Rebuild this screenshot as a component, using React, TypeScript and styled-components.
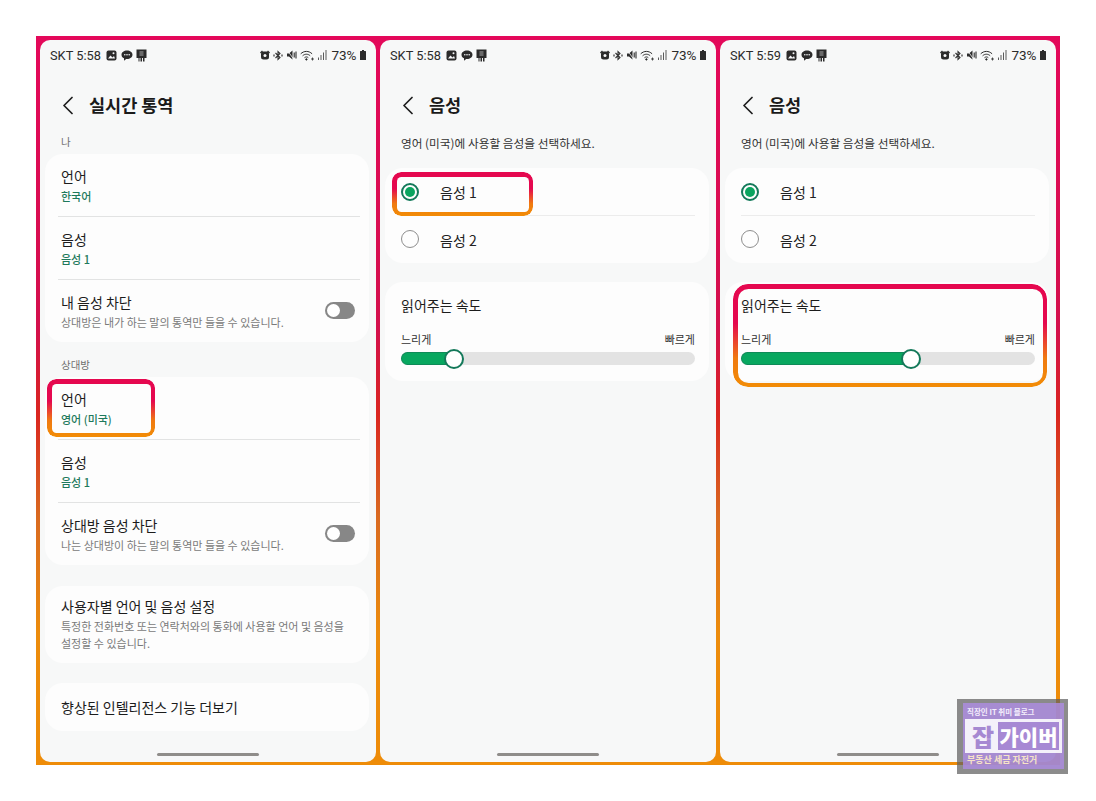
import React from "react";
import styled, { createGlobalStyle } from "styled-components";

const Global = createGlobalStyle`
  html, body { margin: 0; padding: 0; background: #fff; }
  body { font-family: "Noto Sans CJK KR", "Noto Sans", sans-serif; color: #1c1c1c; }
  * { box-sizing: border-box; }
`;

const Page = styled.div`
  width: 1096px;
  height: 801px;
  padding: 36px;
  position: relative;
  overflow: hidden;
`;
const Frame = styled.div`
  width: 1024px;
  height: 729px;
  padding: 4px 4px 3px;
  display: flex;
  gap: 4px;
  background: linear-gradient(180deg, #e4085a 0%, #d30f4c 40%, #da261f 52%, #d96a20 66%, #ec8c0c 82%, #ee8c08 100%);
`;
const Screen = styled.section`
  position: relative;
  width: 336px;
  display: flex;
  flex-direction: column;
  background: #f7f8f8;
  border-radius: 10px;
  overflow: hidden;
`;
const StatusBar = styled.div`
  height: 30px;
  padding: 0 10px;
  display: flex;
  align-items: center;
  justify-content: space-between;
  font-family: Roboto, sans-serif;
  font-size: 12.8px;
  color: #2b2b2b;
`;
const StatusGroup = styled.div`
  display: flex;
  align-items: center;
  gap: 3.5px;
`;
const Clock = styled.span`
  margin-right: 2px;
`;
const Percent = styled.span`
  font-size: 13.5px;
  margin-left: 1px;
`;
const Header = styled.header`
  height: 60px;
  padding: 11px 0 1px 22px;
  display: flex;
  align-items: center;
  gap: 16px;
`;
const Title = styled.h1`
  margin: 0;
  font-size: 17.5px;
  line-height: 24px;
  font-weight: 700;
  color: #1a1a1a;
`;
const SectionLabel = styled.div<{ $top?: number }>`
  height: ${(p) => (p.$top ? 25 + p.$top : 24)}px;
  padding: ${(p) => p.$top ?? 0}px 0 1px 21px;
  display: flex;
  align-items: center;
  font-size: 10.5px;
  color: #6f6f6f;
`;
const Subtitle = styled.div`
  height: 24px;
  padding-left: 21px;
  display: flex;
  align-items: center;
  font-size: 11.7px;
  color: #333;
`;
const Card = styled.div<{ $mt?: number }>`
  margin: ${(p) => p.$mt ?? 0}px 7px 0 5px;
  background: #fdfdfd;
  border-radius: 18px;
`;
const Row = styled.div`
  height: 62px;
  padding: 13px 14px 0 16px;
  display: flex;
  justify-content: space-between;
  align-items: flex-start;
`;
const ToggleRowBox = styled(Row)`
  padding-top: 13px;
`;
const Divider = styled.div`
  height: 1px;
  margin: 0 9px 0 13px;
  background: #e2e3e3;
`;
const RadioDivider = styled(Divider)`
  margin: 0 14px 0 16px;
  background: #ececec;
`;
const RowText = styled.div`
  display: flex;
  flex-direction: column;
`;
const RowTitle = styled.div`
  font-size: 14px;
  line-height: 18px;
  color: #1c1c1c;
`;
const RowValue = styled.div`
  margin-top: 3px;
  font-size: 11px;
  line-height: 16px;
  font-weight: 500;
  color: #1f7a5c;
`;
const RowHint = styled.div`
  margin-top: 3px;
  font-size: 11px;
  line-height: 16px;
  color: #7a7a7a;
`;
const Toggle = styled.div`
  width: 30px;
  height: 17px;
  margin-top: 9px;
  padding: 2px;
  border-radius: 9px;
  background: #878787;
  display: flex;
`;
const ToggleKnob = styled.div`
  width: 13px;
  height: 13px;
  border-radius: 50%;
  background: #fff;
`;
const InfoCard = styled(Card)`
  height: 77px;
  padding: 11px 14px 0 16px;
`;
const InfoText = styled.div`
  margin-top: 3px;
  font-size: 11px;
  line-height: 17px;
  color: #7a7a7a;
`;
const LinkCard = styled(Card)`
  height: 48px;
  padding: 0 0 1px 16px;
  display: flex;
  align-items: center;
`;
const HomeBar = styled.div`
  width: 102px;
  height: 3px;
  margin: auto auto 6px;
  border-radius: 2px;
  background: #8f8d8a;
`;
const RadioRow = styled.div`
  height: 47px;
  padding-left: 16px;
  display: flex;
  align-items: center;
  font-size: 14px;
  color: #222;
`;
const RadioCircle = styled.div<{ $on?: boolean }>`
  width: 18px;
  height: 18px;
  margin: ${(p) => (p.$on ? "0" : "-2px")} 21px 0 0;
  border-radius: 50%;
  border: ${(p) => (p.$on ? "2px solid #14795a" : "1.5px solid #8e8e8e")};
  display: flex;
  align-items: center;
  justify-content: center;
`;
const RadioDot = styled.div`
  width: 10px;
  height: 10px;
  border-radius: 50%;
  background: #0aa45f;
`;
const SpeedCard = styled(Card)`
  height: 99px;
  padding: 14px 14px 0 16px;
`;
const SpeedLabels = styled.div`
  margin-top: 17px;
  display: flex;
  justify-content: space-between;
  font-size: 11px;
  line-height: 16px;
  color: #333;
`;
const Track = styled.div`
  position: relative;
  margin-top: 5px;
  height: 13px;
  border-radius: 7px;
  background: #e3e3e3;
`;
const Fill = styled.div<{ $value: number }>`
  width: ${(p) => p.$value}px;
  height: 13px;
  border-radius: 7px 0 0 7px;
  background: #08a75f;
  border: 1px solid #0f8a58;
  border-right: 0;
`;
const Thumb = styled.div<{ $value: number }>`
  position: absolute;
  left: ${(p) => p.$value - 10}px;
  top: -3.5px;
  width: 20px;
  height: 20px;
  border-radius: 50%;
  background: #fff;
  border: 2px solid #14795a;
`;
const Highlight = styled.div<{ $x: number; $y: number; $w: number; $h: number; $r?: number }>`
  position: absolute;
  left: ${(p) => p.$x}px;
  top: ${(p) => p.$y}px;
  width: ${(p) => p.$w}px;
  height: ${(p) => p.$h}px;
  padding: 4.5px;
  border-radius: ${(p) => p.$r ?? 9}px;
  background: linear-gradient(180deg, #e5084f 0%, #e5084f 38%, #f07a10 72%, #f28c06 100%);
  -webkit-mask: linear-gradient(#000 0 0) content-box, linear-gradient(#000 0 0);
  -webkit-mask-composite: xor;
  mask-composite: exclude;
`;
const Watermark = styled.div`
  position: absolute;
  left: 957px;
  top: 699px;
  width: 111px;
  height: 75px;
  padding: 4px 4px 5px 6px;
  background: rgba(95, 95, 95, 0.72);
`;
const WatermarkInner = styled.div`
  height: 66px;
  padding: 2px;
  background: rgba(172, 140, 222, 0.85);
  display: flex;
  flex-direction: column;
`;
const WatermarkTop = styled.div`
  height: 14px;
  padding-left: 2px;
  font-size: 7.5px;
  line-height: 14px;
  font-weight: 700;
  color: #f4eefc;
`;
const WatermarkLogo = styled.div`
  height: 34px;
  padding: 3px;
  display: flex;
  align-items: center;
  background: rgba(255, 255, 255, 0.88);
`;
const WatermarkChar = styled.div`
  width: 30px;
  text-align: center;
  font-size: 24px;
  line-height: 28px;
  font-weight: 900;
  color: #a688d2;
`;
const WatermarkName = styled.div`
  flex: 1;
  height: 28px;
  text-align: center;
  font-size: 21px;
  line-height: 28px;
  font-weight: 900;
  color: #fff;
  background: rgba(160, 128, 208, 0.92);
`;
const WatermarkBottom = styled.div`
  height: 14px;
  padding-left: 2px;
  font-size: 9px;
  line-height: 14px;
  font-weight: 700;
  color: #f6e3c8;
`;

const Svg = styled.svg`
  display: block;
  flex: none;
`;

const Back = () => (
  <Svg width="11" height="19" viewBox="0 0 11 19" fill="none">
    <path d="M10 1.500 2 9.500l8 8" stroke="#1c1c1c" strokeWidth="1.700" strokeLinecap="round" strokeLinejoin="round" />
  </Svg>
);
const IconImage = () => (
  <Svg width="11" height="11" viewBox="0 0 11 11">
    <rect x="0.500" y="0.500" width="10" height="10" rx="2" fill="#2b2b2b" />
    <path d="M2 8.500 4.500 5.500l2 2L8 6l1 2.500z" fill="#f6f7f8" />
    <circle cx="7.500" cy="3.300" r="1" fill="#f6f7f8" />
  </Svg>
);
const IconChat = () => (
  <Svg width="12" height="11" viewBox="0 0 12 11">
    <path d="M6 .5c3 0 5.500 1.800 5.500 4.200S9 9 6 9l-.8 0L3 10.800V8.300C1.500 7.600.5 6.300.5 4.700.5 2.300 3 .5 6 .5z" fill="#2b2b2b" />
    <circle cx="3.800" cy="4.700" r=".8" fill="#f6f7f8" />
    <circle cx="6" cy="4.700" r=".8" fill="#f6f7f8" />
    <circle cx="8.200" cy="4.700" r=".8" fill="#f6f7f8" />
  </Svg>
);
const IconBoard = () => (
  <Svg width="11" height="13" viewBox="0 0 11 13">
    <path d="M.5 .5h10v8.500H8.500V12.500H7V9H6V12.500H4.500V9H3.500V12.500H2.500V9H.5z" fill="#2b2b2b" />
    <path d="M3.500 2h4v5h-4z" fill="#6a6a6a" />
  </Svg>
);
const IconAlarm = () => (
  <Svg width="10" height="10" viewBox="0 0 10 10">
    <rect x="1" y="1.500" width="8" height="8" rx="2.500" fill="#2b2b2b" />
    <path d="M0 2.500 2 .5l1 1-2 2zM10 2.500 8 .5 7 1.500l2 2z" fill="#2b2b2b" />
    <circle cx="5" cy="5.500" r="1.500" fill="#f6f7f8" />
  </Svg>
);
const IconBluetooth = () => (
  <Svg width="10" height="11" viewBox="0 0 10 11" fill="none" stroke="#333">
    <path d="M2.500 3 7 7.500 5 9.500v-8L7 3.500 2.500 8" strokeWidth="1.100" />
    <path d="M1 4.500v2M9 4.500v2" strokeWidth="1.200" />
  </Svg>
);
const IconMute = () => (
  <Svg width="10" height="10" viewBox="0 0 10 10">
    <path d="M0 3.500h2L5.500.5v9L2 6.500H0z" fill="#2b2b2b" />
    <path d="M7.200 2.500v5M9 1.500v7" stroke="#2b2b2b" strokeWidth="1.100" />
    <path d="M.5.500 6.500 9" stroke="#f6f7f8" strokeWidth=".8" />
  </Svg>
);
const IconWifi = () => (
  <Svg width="14" height="11" viewBox="0 0 14 11" fill="none" stroke="#2b2b2b" strokeWidth="1">
    <path d="M.7 3.800C4 .6 8.800.6 12.100 3.800" />
    <path d="M2.600 5.800c2.300-2.100 5.400-2.100 7.600 0" />
    <path d="M4.500 7.700c1.200-1 2.700-1 3.800 0" />
    <circle cx="6.400" cy="9.400" r=".7" fill="#2b2b2b" />
    <path d="M12.500 7.500v3M11 9h3" strokeWidth=".8" />
  </Svg>
);
const IconSignal = () => (
  <Svg width="9" height="10" viewBox="0 0 9 10" fill="#5a5a5a">
    <rect x="0" y="7.500" width="1" height="2.500" />
    <rect x="2.500" y="5" width="1" height="5" />
    <rect x="5" y="2.500" width="1" height="7.500" />
    <rect x="7.500" y="0" width="1" height="10" />
  </Svg>
);
const IconBattery = () => (
  <Svg width="6" height="10" viewBox="0 0 6 10">
    <path d="M2 0h2v1h1.500a.5.5 0 0 1 .5.500V9.500a.5.5 0 0 1-.5.500H.5a.5.5 0 0 1-.5-.500V1.500A.5.5 0 0 1 .5 1H2z" fill="#2b2b2b" />
  </Svg>
);

const Status = ({ time }: { time: string }) => (
  <StatusBar>
    <StatusGroup>
      <Clock>SKT {time}</Clock>
      <IconImage />
      <IconChat />
      <IconBoard />
    </StatusGroup>
    <StatusGroup>
      <IconAlarm />
      <IconBluetooth />
      <IconMute />
      <IconWifi />
      <IconSignal />
      <Percent>73%</Percent>
      <IconBattery />
    </StatusGroup>
  </StatusBar>
);

const Top = ({ title }: { title: string }) => (
  <Header>
    <Back />
    <Title>{title}</Title>
  </Header>
);

const ValueRow = ({ title, value }: { title: string; value: string }) => (
  <Row>
    <RowText>
      <RowTitle>{title}</RowTitle>
      <RowValue>{value}</RowValue>
    </RowText>
  </Row>
);

const ToggleRow = ({ title, hint }: { title: string; hint: string }) => (
  <ToggleRowBox>
    <RowText>
      <RowTitle>{title}</RowTitle>
      <RowHint>{hint}</RowHint>
    </RowText>
    <Toggle>
      <ToggleKnob />
    </Toggle>
  </ToggleRowBox>
);

const VoiceScreen = ({ time, speed, children }: { time: string; speed: number; children?: React.ReactNode }) => (
  <Screen>
    <Status time={time} />
    <Top title="음성" />
    <Subtitle>영어 (미국)에 사용할 음성을 선택하세요.</Subtitle>
    <Card $mt={14}>
      <RadioRow>
        <RadioCircle $on>
          <RadioDot />
        </RadioCircle>
        음성 1
      </RadioRow>
      <RadioDivider />
      <RadioRow>
        <RadioCircle />
        음성 2
      </RadioRow>
    </Card>
    <SpeedCard $mt={19}>
      <RowTitle>읽어주는 속도</RowTitle>
      <SpeedLabels>
        <span>느리게</span>
        <span>빠르게</span>
      </SpeedLabels>
      <Track>
        <Fill $value={speed} />
        <Thumb $value={speed} />
      </Track>
    </SpeedCard>
    <HomeBar />
    {children}
  </Screen>
);

export default function App() {
  return (
    <Page>
      <Global />
      <Frame>
        <Screen>
          <Status time="5:58" />
          <Top title="실시간 통역" />
          <SectionLabel>나</SectionLabel>
          <Card>
            <ValueRow title="언어" value="한국어" />
            <Divider />
            <ValueRow title="음성" value="음성 1" />
            <Divider />
            <ToggleRow title="내 음성 차단" hint="상대방은 내가 하는 말의 통역만 들을 수 있습니다." />
          </Card>
          <SectionLabel $top={10}>상대방</SectionLabel>
          <Card>
            <ValueRow title="언어" value="영어 (미국)" />
            <Divider />
            <ValueRow title="음성" value="음성 1" />
            <Divider />
            <ToggleRow title="상대방 음성 차단" hint="나는 상대방이 하는 말의 통역만 들을 수 있습니다." />
          </Card>
          <InfoCard $mt={21}>
            <RowTitle>사용자별 언어 및 음성 설정</RowTitle>
            <InfoText>
              특정한 전화번호 또는 연락처와의 통화에 사용할 언어 및 음성을
              <br />
              설정할 수 있습니다.
            </InfoText>
          </InfoCard>
          <LinkCard $mt={20}>
            <RowTitle>향상된 인텔리전스 기능 더보기</RowTitle>
          </LinkCard>
          <HomeBar />
          <Highlight $x={7} $y={339} $w={108} $h={58} />
        </Screen>
        <VoiceScreen time="5:58" speed={53}>
          <Highlight $x={12} $y={132} $w={141} $h={44} />
        </VoiceScreen>
        <VoiceScreen time="5:59" speed={170}>
          <Highlight $x={13} $y={244} $w={314} $h={103} $r={15} />
        </VoiceScreen>
      </Frame>
      <Watermark>
        <WatermarkInner>
          <WatermarkTop>직장인 IT 취미 블로그</WatermarkTop>
          <WatermarkLogo>
            <WatermarkChar>잡</WatermarkChar>
            <WatermarkName>가이버</WatermarkName>
          </WatermarkLogo>
          <WatermarkBottom>부동산 세금 자전거</WatermarkBottom>
        </WatermarkInner>
      </Watermark>
    </Page>
  );
}
